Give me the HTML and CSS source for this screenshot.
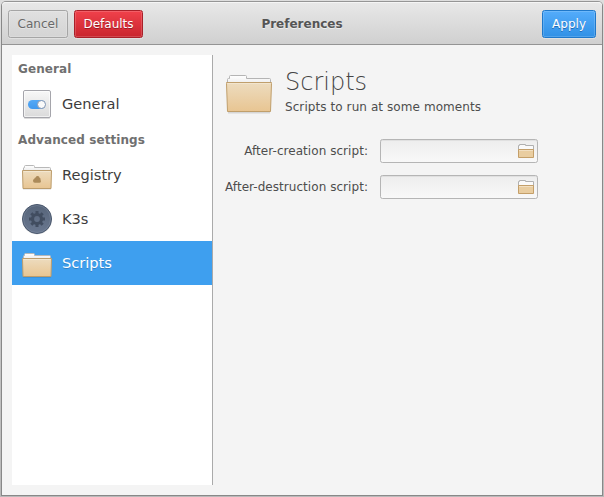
FILE: index.html
```html
<!DOCTYPE html>
<html lang="en">
<head>
<meta charset="utf-8">
<title>Preferences</title>
<link rel="stylesheet" href="styles.css">
</head>
<body>
<svg class="defs" aria-hidden="true">
  <defs>
    <linearGradient id="tan" x1="0" y1="0" x2="0" y2="1"><stop offset="0" stop-color="#eddcbf"/><stop offset="1" stop-color="#e8c592"/></linearGradient>
    <linearGradient id="paper" x1="0" y1="0" x2="0" y2="1"><stop offset="0" stop-color="#fff"/><stop offset="1" stop-color="#ececec"/></linearGradient>
    <linearGradient id="plate" x1="0" y1="0" x2="0" y2="1"><stop offset="0" stop-color="#f8f8f8"/><stop offset="1" stop-color="#dadada"/></linearGradient>
    <linearGradient id="slate" x1="0" y1="0" x2="0" y2="1"><stop offset="0" stop-color="#566479"/><stop offset="1" stop-color="#6a7890"/></linearGradient>
    <linearGradient id="blue" x1="0" y1="0" x2="0" y2="1"><stop offset="0" stop-color="#56a9f5"/><stop offset="1" stop-color="#4299ee"/></linearGradient>
    <symbol id="folder" viewBox="0 0 32 32">
      <path d="M2 29.500H30V30.500H2z" fill="#000" opacity=".16"/>
      <path d="M2.500 12V9Q2.500 8.500 3.500 8.500V7.500Q3.500 6.500 4.500 6.500H12.500Q13.500 6.500 13.500 7.500V8.500H28.500Q29.500 8.500 29.500 9.500V12H2.500z" fill="url(#paper)" stroke="#b8b8b8"/>
      <path d="M1.500 11.500H30.500L30 29.500H2z" fill="url(#tan)" stroke="#bd9d6c" stroke-linejoin="round"/>
      <path d="M2.500 12.500H29.500" stroke="#f5ead6" opacity=".8"/>
    </symbol>
    <symbol id="folder-small" viewBox="0 0 16 14">
      <path d="M.5 6V1.500H1.500V.5H7.500V1.500H15.500V6" fill="#fafafa" stroke="#b0b0b0"/>
      <path d="M.5 5.500H15.500V13.500H.5z" fill="#e9cda0" stroke="#c49f69"/>
      <path d="M1 6.500H15" stroke="#f1dfc2"/>
    </symbol>
  </defs>
</svg>
<main class="window">
  <header class="titlebar">
    <div class="actions"><button class="button">Cancel</button><button class="button danger">Defaults</button></div>
    <h1 class="title">Preferences</h1>
    <div class="actions end"><button class="button primary">Apply</button></div>
  </header>
  <div class="body">
    <nav class="sidebar">
      <h2 class="group">General</h2>
      <a class="item">
        <svg class="icon" viewBox="0 0 32 32">
          <rect x="3" y="29" width="26" height="2" rx="1" opacity=".14"/>
          <rect x="2.500" y="2.500" width="27" height="27" rx="1.500" fill="url(#plate)" stroke="#a5a5ab"/>
          <rect x="3.500" y="3.500" width="25" height="25" rx=".5" fill="none" stroke="#fff" opacity=".6"/>
          <rect x="7" y="12" width="17.500" height="9" rx="4.500" fill="url(#blue)"/>
          <circle cx="20.500" cy="16.500" r="4" fill="#fafafa" stroke="#8798b2"/>
        </svg>
        <span>General</span>
      </a>
      <h2 class="group">Advanced settings</h2>
      <a class="item">
        <svg class="icon" viewBox="0 0 32 32"><use href="#folder"/><path d="M13.800 23.700Q12 23.700 12 21.700Q12 20.200 13.300 20Q13.300 18.500 14.600 18.400Q15.200 17 16.700 17Q18.400 17 18.700 19Q20 19.300 19.500 20.500Q20.700 23.700 18.500 23.700z" fill="#ab8a5a"/></svg>
        <span>Registry</span>
      </a>
      <a class="item">
        <svg class="icon" viewBox="0 0 32 32">
          <circle cx="16" cy="16.500" r="15" opacity=".12"/>
          <circle cx="16" cy="16" r="14.500" fill="url(#slate)" stroke="#48566c"/>
          <circle cx="16" cy="16" r="13.500" fill="none" stroke="#8794a8" opacity=".4"/>
          <g fill="none" stroke="#414d60"><circle cx="16" cy="16" r="4.500" stroke-width="3.200"/><path stroke-width="3" d="M16 8v3M16 21v3M8 16h3M21 16h3M10.300 10.300l2.200 2.200M19.500 19.500l2.200 2.200M10.300 21.700l2.200-2.200M19.500 12.500l2.200-2.200"/></g>
        </svg>
        <span>K3s</span>
      </a>
      <a class="item selected"><svg class="icon" viewBox="0 0 32 32"><use href="#folder"/></svg><span>Scripts</span></a>
    </nav>
    <section class="content">
      <div class="heading">
        <svg class="hero-icon" viewBox="0 0 48 48">
          <path d="M3 42H45V43.500H3z" opacity=".12"/>
          <path d="M2.500 14V9.500Q2.500 8.500 3.500 8.500H4.500V6.500Q4.500 5.500 5.500 5.500H20.500Q21.500 5.500 21.500 6.500V8.500H44.500Q45.500 8.500 45.500 9.500V14" fill="url(#paper)" stroke="#b4b4b4"/>
          <path d="M1.500 12.500H46.500V13.500L45.500 41.500H2.500L1.500 13.500z" fill="url(#tan)" stroke="#c09f6c" stroke-linejoin="round"/>
          <path d="M2.500 13.500H45.500" stroke="#f5ead6" opacity=".7"/>
        </svg>
        <div><h2 class="page-title">Scripts</h2><p class="subtitle">Scripts to run at some moments</p></div>
      </div>
      <div class="form">
        <label class="label">After-creation script:</label>
        <div class="entry"><svg class="entry-icon"><use href="#folder-small"/></svg></div>
        <label class="label">After-destruction script:</label>
        <div class="entry"><svg class="entry-icon"><use href="#folder-small"/></svg></div>
      </div>
    </section>
  </div>
</main>
</body>
</html>
```
FILE: styles.css
```css
* { box-sizing: border-box; }
html { height: 100%; }
body {
  margin: 0;
  height: 100%;
  padding: 1px;
  overflow: hidden;
  background: linear-gradient(#dedede, #b9b9b9);
  font: 12px/16px "DejaVu Sans", sans-serif;
  color: #4d4d4d;
}
h1, h2, p { margin: 0; }
.defs { position: absolute; width: 0; height: 0; }
.window {
  height: 495px;
  width: 602px;
  display: flex;
  flex-direction: column;
  border: 1px solid #888;
  border-top-color: #959595;
  border-radius: 5px 5px 0 0;
  background: #f4f4f4;
}
.titlebar {
  height: 43px;
  flex: none;
  display: grid;
  grid-template-columns: 1fr auto 1fr;
  align-items: center;
  padding: 2px 6px 0;
  border-bottom: 1px solid #949494;
  border-radius: 4px 4px 0 0;
  background: linear-gradient(#e8e8e8, #d0d0d0);
  box-shadow: inset 0 1px #f5f5f5;
}
.title { font-size: 12px; line-height: 16px; color: #555; text-shadow: 0 1px #eee; }
.actions { display: flex; gap: 6px; }
.end { justify-content: flex-end; }
.button {
  height: 28px;
  padding: 0 8.600px;
  border: 1px solid #a5a5a5;
  border-radius: 2.500px;
  background: linear-gradient(#e0e0e0, #d4d4d4);
  box-shadow: inset 0 0 0 1px rgba(255,255,255,.16), 0 1px rgba(255,255,255,.3);
  font: inherit;
  color: #696969;
  text-shadow: 0 1px rgba(255,255,255,.4);
}
.danger { border-color: #a92029; background: linear-gradient(#f0414b, #c9252e); color: #fff; text-shadow: 0 1px #981c24; }
.primary { padding: 0 9px; border-color: #1f78ca; background: linear-gradient(#54acfb, #3191e6); color: #fff; text-shadow: 0 1px #1f6cb5; }
.body { flex: 1; display: flex; padding: 10px 0; }
.sidebar { width: 201px; margin-left: 10px; background: #fff; border-right: 1px solid #aaa; }
.group { height: 27px; padding-left: 6px; font-size: 12px; line-height: 28px; letter-spacing: .09px; color: #707070; }
.item { height: 44px; display: flex; align-items: center; gap: 9px; padding-left: 9px; font-size: 14.600px; line-height: 18px; color: #3d3d3d; }
.selected { background: #3e9fef; color: #fff; text-shadow: 0 1px rgba(0,0,0,.2); }
.icon { width: 32px; height: 32px; flex: none; }
.content { padding: 11px 0 0 12px; }
.heading { display: flex; gap: 12px; }
.hero-icon { width: 48px; height: 48px; margin-top: 4px; }
.page-title { font-size: 24px; line-height: 32px; font-weight: 200; color: #444; }
.subtitle { margin-top: 1px; line-height: 16px; letter-spacing: .08px; }
.form { display: grid; grid-template-columns: 143px 158px; column-gap: 12px; row-gap: 12px; margin-top: 21px; }
.label { justify-self: end; white-space: nowrap; line-height: 24px; letter-spacing: .05px; }
.entry {
  height: 24px;
  display: flex;
  align-items: center;
  justify-content: flex-end;
  padding-right: 3px;
  border: 1px solid #b5b5b5;
  border-radius: 2.500px;
  background: linear-gradient(#ededed, #f8f8f8);
  box-shadow: inset 0 1px #e0e0e0;
}
.entry-icon { width: 16px; height: 14px; }
```
